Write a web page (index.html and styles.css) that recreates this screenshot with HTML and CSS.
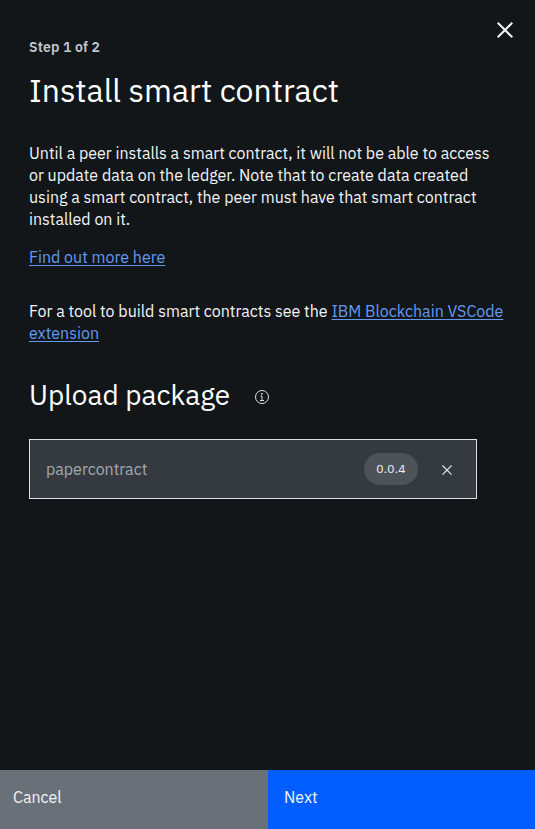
FILE: index.html
```html
<!DOCTYPE html>
<html lang="en">
<head>
<meta charset="utf-8">
<title>Install smart contract</title>
<link rel="stylesheet" href="styles.css">
</head>
<body>
<div class="panel">
  <button class="close" aria-label="Close">
    <svg width="32" height="32" viewBox="0 0 32 32"><path d="M24 9.4L22.6 8 16 14.6 9.4 8 8 9.4 14.6 16 8 22.6 9.4 24 16 17.4 22.6 24 24 22.6 17.4 16z"/></svg>
  </button>
  <main class="content">
    <p class="step">Step 1 of 2</p>
    <h1 class="title">Install smart contract</h1>
    <p class="copy">Until a peer installs a smart contract, it will not be able to access or update data on the ledger. Note that to create data created using a smart contract, the peer must have that smart contract installed on it.</p>
    <p class="more"><a class="link" href="#">Find out more here</a></p>
    <p class="tool">For a tool to build smart contracts see the <a class="link" href="#">IBM Blockchain VSCode extension</a></p>
    <div class="upload">
      <h2 class="subtitle">Upload package</h2>
      <svg class="info" width="16" height="16" viewBox="0 0 16 16"><circle cx="8" cy="8" r="6.5"/><path d="M6.5 7H8v4M6 11.5h4"/><path class="dot" d="M7.1 4h1.6v1.5H7.1z"/></svg>
    </div>
    <div class="file">
      <span class="name">papercontract</span>
      <span class="version">0.0.4</span>
      <svg class="remove" width="20" height="20" viewBox="0 0 32 32"><path d="M24 9.4L22.6 8 16 14.6 9.4 8 8 9.4 14.6 16 8 22.6 9.4 24 16 17.4 22.6 24 24 22.6 17.4 16z"/></svg>
    </div>
  </main>
  <footer class="actions">
    <button class="btn cancel">Cancel</button>
    <button class="btn next">Next</button>
  </footer>
</div>
</body>
</html>
```
FILE: styles.css
```css
* { box-sizing: border-box; margin: 0; padding: 0; }
body {
  background: #121619;
  color: #f2f4f8;
  font: 16px/22px "IBM Plex Sans", Roboto, sans-serif;
}
.panel { position: relative; height: 829px; display: flex; flex-direction: column; }
button { border: 0; background: none; color: inherit; font: inherit; text-align: left; }
.close { position: absolute; top: 14px; right: 14px; width: 32px; height: 32px; fill: #f2f4f8; }
.content { flex: 1; padding: 38px 29px 0; }
.step { font-size: 14px; line-height: 18px; font-weight: 600; letter-spacing: 0.16px; color: #c1c7cd; }
.title { margin-top: 14px; font-size: 32px; line-height: 40px; font-weight: 400; }
.title, .subtitle { color: #fff; }
.copy { margin-top: 32px; }
.more { margin-top: 16px; }
.tool { margin-top: 32px; }
.link {
  color: #6499f2; text-decoration: underline; text-decoration-thickness: 1px;
  text-underline-offset: 2px; text-decoration-skip-ink: none;
}
.upload { display: flex; align-items: center; margin-top: 33px; height: 36px; }
.subtitle { width: 201px; font-size: 28px; line-height: 36px; font-weight: 400; white-space: nowrap; }
.info { margin: 4px 0 0 24px; fill: none; stroke: #dde1e6; stroke-width: 1; }
.info .dot { fill: #dde1e6; stroke: none; }
.file {
  display: flex; align-items: center; width: 448px; height: 60px; margin-top: 26px;
  padding: 0 19px 0 16px; background: #343a3f; border: 1px solid #dde1e6;
}
.name { flex: 1; color: #a2a9b0; }
.version {
  width: 54px; height: 32px; border-radius: 16px; background: #4d5358;
  font-size: 12px; line-height: 32px; letter-spacing: 0.32px; text-align: center;
}
.remove { margin: 2px 0 0 19px; fill: #dde1e6; }
.actions { display: flex; height: 59px; }
.btn { padding-bottom: 5px; }
.cancel { width: 268px; padding-left: 13px; background: #697077; }
.next { flex: 1; padding-left: 16px; background: #005dff; }
```
